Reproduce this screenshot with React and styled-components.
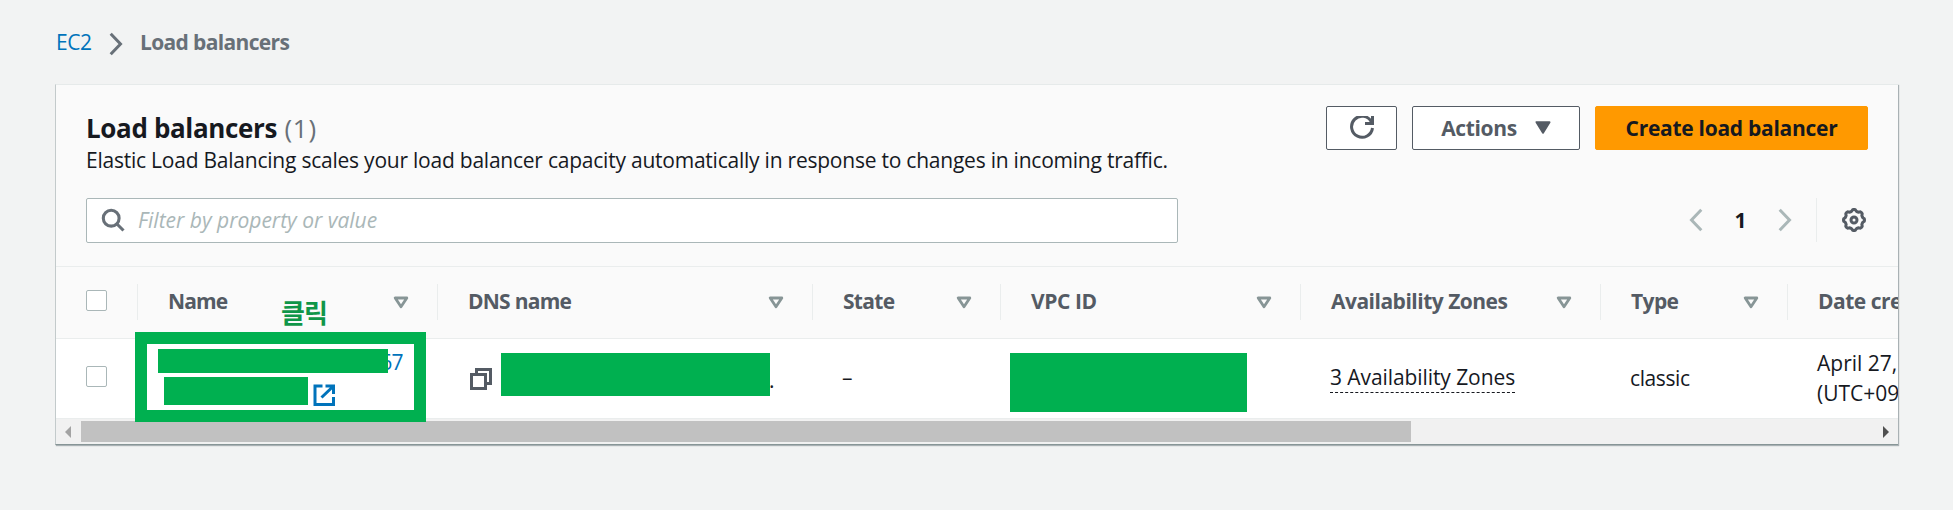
import React from "react";
import styled, { createGlobalStyle, css } from "styled-components";

const Global = createGlobalStyle`
  *, *::before, *::after { box-sizing: border-box; }
  body {
    margin: 0;
    background: #f2f3f3;
    color: #16191f;
    font: 400 21px/30px "Open Sans", "Noto Sans", "Noto Sans CJK KR", sans-serif;
    overflow: hidden;
  }
`;

const Page = styled.div`
  height: 510px;
  padding: 0 55px 0 55px;
`;

const Breadcrumbs = styled.nav`
  display: flex;
  align-items: center;
  height: 84px;
`;

const Crumb = styled.span`
  width: ${(p) => p.$width || "auto"};
  padding-left: ${(p) => p.$indent || 0}px;
  letter-spacing: ${(p) => p.$spacing}px;
  color: ${(p) => (p.$current ? "#687078" : "#0073bb")};
  font-weight: ${(p) => (p.$current ? 700 : 400)};
`;

const Panel = styled.main`
  height: 361px;
  border-top: 1px solid #e6eaea;
  border-left: 1px solid #c3cacb;
  border-bottom: 1px solid #879596;
  background: #fafafa;
  box-shadow: 1px 1px 1px 0 rgba(0, 28, 36, 0.3);
`;

const PanelHead = styled.header`
  display: flex;
  justify-content: space-between;
  height: 113px;
  padding: 21px 30px 0 30px;
`;

const Heading = styled.div`
  padding-top: 6px;
`;

const Title = styled.h1`
  margin: 0 0 1px;
  font-size: 26px;
  line-height: 32px;
  letter-spacing: -0.36px;
  font-weight: 700;
`;

const Count = styled.span`
  margin-left: 1px;
  color: #687078;
  font-weight: 400;
  letter-spacing: 0.8px;
`;

const Description = styled.p`
  margin: 0;
  letter-spacing: -0.23px;
`;

const Actions = styled.div`
  display: flex;
  gap: 15px;
`;

const Button = styled.button`
  display: flex;
  align-items: center;
  justify-content: center;
  gap: 18px;
  width: ${(p) => p.$width}px;
  height: 44px;
  padding: 0 0 1px;
  border: 1px solid #545b64;
  border-radius: 2px;
  background: #fff;
  color: #545b64;
  font: inherit;
  font-weight: 700;
  letter-spacing: ${(p) => p.$spacing || 0}px;
  ${(p) =>
    p.$primary &&
    css`
      border-color: #ff9900;
      background: #ff9900;
      color: #16191f;
    `}
`;

const Tools = styled.div`
  display: flex;
  align-items: flex-start;
  justify-content: space-between;
  height: 45px;
  padding: 0 32px 0 30px;
`;

const Search = styled.label`
  display: flex;
  align-items: center;
  gap: 13px;
  width: 1092px;
  height: 45px;
  padding: 0 0 1px 14px;
  border: 1px solid #aab7b8;
  border-radius: 2px;
  background: #fff;
`;

const Placeholder = styled.span`
  color: #aab7b8;
  font-style: italic;
`;

const Pager = styled.div`
  display: flex;
  align-items: center;
  height: 44px;
`;

const PageNumber = styled.span`
  width: 75px;
  color: #16191f;
  font-weight: 700;
  text-align: center;
`;

const Preferences = styled.div`
  display: flex;
  align-items: center;
  justify-content: flex-end;
  width: 50px;
  height: 44px;
  margin-left: 24px;
  border-left: 1px solid #eaeded;
`;

const TableArea = styled.section`
  height: 153px;
  margin-top: 23px;
  border-top: 1px solid #eaeded;
  overflow-x: clip;
  overflow-y: visible;
`;

const Grid = styled.div`
  display: grid;
  grid-template-columns: 81px 300px 375px 188px 300px 300px 187px 300px;
  grid-template-rows: 100%;
  height: ${(p) => p.$height}px;
  border-bottom: 1px solid #eaeded;
  background: ${(p) => p.$background};
`;

const HeadCell = styled.div`
  position: relative;
  display: flex;
  align-items: center;
  justify-content: space-between;
  height: 36px;
  margin-top: 17px;
  padding: 0 28px 2px 30px;
  border-left: 1px solid #eaeded;
  color: #545b64;
  font-weight: 700;
  letter-spacing: ${(p) => p.$spacing || -0.5}px;
  white-space: nowrap;
  ${(p) =>
    p.$select &&
    css`
      border-left: 0;
      padding: 0 0 4px 30px;
    `}
`;

const Cell = styled.div`
  display: flex;
  align-items: ${(p) => (p.$top ? "flex-start" : "center")};
  padding: ${(p) => p.$padding || "0 0 0 30px"};
  letter-spacing: ${(p) => p.$spacing || 0}px;
  white-space: ${(p) => (p.$wrap ? "pre" : "nowrap")};
`;

const Checkbox = styled.span`
  width: 21px;
  height: 21px;
  border: 1px solid #aab7b8;
  border-radius: 2px;
  background: #fff;
`;

const Zones = styled.span`
  height: 29px;
  line-height: 26px;
  letter-spacing: -0.08px;
  border-bottom: 1px dashed #16191f;
`;

const Mask = styled.span`
  flex: none;
  width: ${(p) => p.$width}px;
  height: ${(p) => p.$height}px;
  background: #00b050;
`;

const Highlight = styled.div`
  position: relative;
  z-index: 1;
  flex: none;
  width: 291px;
  height: 90px;
  margin: -7px 0 0 -2px;
  padding: 5px 0 0 11px;
  border: 12px solid #00b050;
  background: #fff;
`;

const NameLine = styled.div`
  display: flex;
  height: ${(p) => p.$height}px;
  margin-left: ${(p) => p.$indent || 0}px;
  color: #0073bb;
`;

const NameTail = styled.span`
  display: flex;
  justify-content: flex-end;
  width: 15px;
  height: 30px;
  margin-top: -2px;
  letter-spacing: -0.6px;
  line-height: 30px;
  overflow: hidden;
`;

const Tail = styled.span`
  margin: 12px 0 0 -1px;
`;

const Note = styled.span`
  position: absolute;
  left: 143px;
  top: 11px;
  color: #0f9648;
  font: 700 26px/34px "Noto Sans CJK KR", sans-serif;
  letter-spacing: -0.8px;
`;

const Scrollbar = styled.div`
  display: flex;
  align-items: center;
  justify-content: space-between;
  height: 25px;
  padding: 0 9px;
  background: #f1f1f1;
`;

const Track = styled.div`
  flex: 1;
  padding-left: 10px;
`;

const Thumb = styled.div`
  width: 1330px;
  height: 21px;
  background: #c1c1c1;
`;

const Icon = styled.svg`
  flex: none;
  display: block;
  width: ${(p) => p.$w || 24}px;
  height: ${(p) => p.$h || 24}px;
  margin: ${(p) => p.$margin || 0};
  fill: ${(p) => p.$fill || "none"};
  stroke: ${(p) => p.$stroke || "none"};
  stroke-width: ${(p) => p.$weight || 2};
`;

const Chevron = ({ left, color, margin }) => (
  <Icon viewBox="0 0 14 24" $w={14} $h={24} $stroke={color} $margin={margin} $weight={3}>
    <path d={left ? "M12.3 1.8 2.5 12l9.8 10.2" : "M1.7 1.8 11.5 12l-9.8 10.2"} />
  </Icon>
);

const SortIcon = () => (
  <Icon viewBox="0 0 16 13" $w={16} $h={13} $stroke="#879596" $margin="2px 0 0" $weight={2.8}>
    <path d="M2.2 2h11.6L8 10.8z" strokeLinejoin="round" />
  </Icon>
);

const gearPath = (() => {
  const pts = [];
  for (let i = 0; i <= 96; i += 1) {
    const a = (i / 96) * Math.PI * 2;
    const r = 9.7 + 0.8 * Math.tanh(2 * Math.cos(8 * a));
    pts.push(`${(12 + r * Math.sin(a)).toFixed(2)} ${(12 - r * Math.cos(a)).toFixed(2)}`);
  }
  return `M${pts.join("L")}Z`;
})();

const GearIcon = () => (
  <Icon viewBox="0 0 24 24" $stroke="#545b64" $weight={3}>
    <path d={gearPath} />
    <circle cx="12" cy="12" r="3" />
  </Icon>
);

const columns = [
  ["Name", -0.9],
  ["DNS name", -0.75],
  ["State", -0.7],
  ["VPC ID", -0.4],
  ["Availability Zones", -0.5],
  ["Type", -0.6],
];

export default function App() {
  return (
    <Page>
      <Global />
      <Breadcrumbs>
        <Crumb $spacing={-0.5} $width="54px" $indent={1}>EC2</Crumb>
        <Chevron color="#687078" margin="4px 0 0" />
        <Crumb $current $spacing={-0.65} $indent={17}>Load balancers</Crumb>
      </Breadcrumbs>
      <Panel>
        <PanelHead>
          <Heading>
            <Title>Load balancers <Count>(1)</Count></Title>
            <Description>
              Elastic Load Balancing scales your load balancer capacity automatically in response to changes in incoming traffic.
            </Description>
          </Heading>
          <Actions>
            <Button $width={71} aria-label="Refresh">
              <Icon viewBox="0 0 16 16" $stroke="#545b64">
                <path d="M10 5h5V0" />
                <path d="M15 8a7 7 0 1 1-.7-4" />
              </Icon>
            </Button>
            <Button $width={168} $spacing={-0.35}>
              Actions
              <Icon viewBox="0 0 16 13" $w={16} $h={13} $fill="#545b64" $stroke="#545b64">
                <path d="M1.5 1.2h13L8 11.6z" strokeLinejoin="round" />
              </Icon>
            </Button>
            <Button $primary $width={273} $spacing={-0.28}>Create load balancer</Button>
          </Actions>
        </PanelHead>
        <Tools>
          <Search>
            <Icon viewBox="0 0 24 24" $stroke="#687078" $weight={3.1}>
              <circle cx="10.2" cy="10.2" r="7.9" />
              <path d="m15.5 15.5 7 7" />
            </Icon>
            <Placeholder>Filter by property or value</Placeholder>
          </Search>
          <Pager>
            <Chevron left color="#aab7b8" />
            <PageNumber>1</PageNumber>
            <Chevron color="#aab7b8" />
            <Preferences><GearIcon /></Preferences>
          </Pager>
        </Tools>
        <TableArea>
          <Grid $height={72} $background="#fafafa">
            <HeadCell $select><Checkbox /></HeadCell>
            {columns.map(([name, spacing], i) => (
              <HeadCell key={name} $spacing={spacing}>
                {name}
                {i === 0 && <Note>클릭</Note>}
                <SortIcon />
              </HeadCell>
            ))}
            <HeadCell>Date created</HeadCell>
          </Grid>
          <Grid $height={80} $background="#fff">
            <Cell $padding="0 0 5px 30px"><Checkbox /></Cell>
            <Cell $top $padding="0">
              <Highlight>
                <NameLine $height={28}>
                  <Mask $width={230} $height={24} />
                  <NameTail>67</NameTail>
                </NameLine>
                <NameLine $height={30} $indent={6}>
                  <Mask $width={144} $height={28} />
                  <Icon viewBox="0 0 24 24" $stroke="#0073bb" $margin="6px 0 0 4px" $weight={3}>
                    <path d="M10.5 3H3v18.5h18.5V14M13.5 3h8v8M9.5 14.5 21 3.5" />
                  </Icon>
                </NameLine>
              </Highlight>
            </Cell>
            <Cell $top $padding="14px 0 0 32px">
              <Icon viewBox="0 0 24 24" $stroke="#545b64" $margin="14px 8px 0 0" $weight={3}>
                <path d="M2.5 7.5h14v14h-14z" />
                <path d="M7.5 7.5v-5h14v14h-5" />
              </Icon>
              <Mask $width={269} $height={43} />
              <Tail>.</Tail>
            </Cell>
            <Cell $padding="0 0 4px 30px">–</Cell>
            <Cell $top $padding="14px 0 0 10px"><Mask $width={237} $height={59} /></Cell>
            <Cell><Zones>3 Availability Zones</Zones></Cell>
            <Cell $padding="0 0 2px 30px" $spacing={-0.4}>classic</Cell>
            <Cell $wrap $top $padding="9px 0 0 30px">{"April 27, 2023, 15:20\n(UTC+09:00)"}</Cell>
          </Grid>
        </TableArea>
        <Scrollbar>
          <Icon viewBox="0 0 6 12" $w={6} $h={12} $fill="#a3a3a3"><path d="M6 0v12L0 6z" /></Icon>
          <Track><Thumb /></Track>
          <Icon viewBox="0 0 6 12" $w={6} $h={12} $fill="#505050"><path d="M0 0v12l6-6z" /></Icon>
        </Scrollbar>
      </Panel>
    </Page>
  );
}
